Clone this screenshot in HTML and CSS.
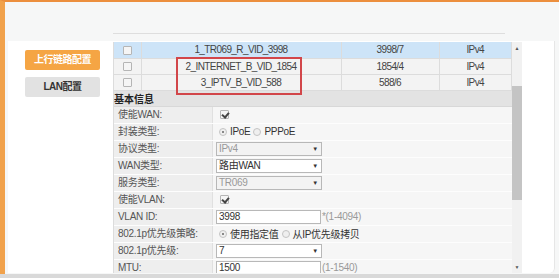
FILE: index.html
```html
<!DOCTYPE html>
<html lang="zh-CN">
<head>
  <meta charset="UTF-8" />
  <title>WAN配置</title>
  <link rel="stylesheet" href="styles.css">
</head>
<body>
  <div class="frame">
    <div class="top"><div class="top-line"></div></div>
    <div class="panel">
      <div class="side">
        <div class="btn btn-on">上行链路配置</div>
        <div class="btn">LAN配置</div>
      </div>
      <div class="main">
        <div class="scroll-body">
          <table class="wan-list">
            <tr class="picked">
              <td class="c-chk"><span class="chk"></span></td>
              <td class="c-name">1_TR069_R_VID_3998</td>
              <td class="c-vid">3998/7</td>
              <td class="c-ip">IPv4</td>
            </tr>
            <tr>
              <td class="c-chk"><span class="chk"></span></td>
              <td class="c-name">2_INTERNET_B_VID_1854</td>
              <td class="c-vid">1854/4</td>
              <td class="c-ip">IPv4</td>
            </tr>
            <tr>
              <td class="c-chk"><span class="chk"></span></td>
              <td class="c-name">3_IPTV_B_VID_588</td>
              <td class="c-vid">588/6</td>
              <td class="c-ip">IPv4</td>
            </tr>
          </table>
          <div class="mark"></div>

          <div class="section">基本信息</div>
          <div class="form">
            <div class="row">
              <div class="lbl">使能WAN:</div>
              <div class="val"><span class="chk on"></span></div>
            </div>
            <div class="row">
              <div class="lbl">封装类型:</div>
              <div class="val">
                <span class="radio on"></span><span class="opt">IPoE</span>
                <span class="radio"></span><span class="opt">PPPoE</span>
              </div>
            </div>
            <div class="row">
              <div class="lbl">协议类型:</div>
              <div class="val"><div class="sel off">IPv4<span class="caret">▼</span></div></div>
            </div>
            <div class="row">
              <div class="lbl">WAN类型:</div>
              <div class="val"><div class="sel">路由WAN<span class="caret">▼</span></div></div>
            </div>
            <div class="row">
              <div class="lbl">服务类型:</div>
              <div class="val"><div class="sel off">TR069<span class="caret">▼</span></div></div>
            </div>
            <div class="row">
              <div class="lbl">使能VLAN:</div>
              <div class="val"><span class="chk on"></span></div>
            </div>
            <div class="row">
              <div class="lbl">VLAN ID:</div>
              <div class="val"><div class="inp">3998</div><span class="hint">*(1-4094)</span></div>
            </div>
            <div class="row">
              <div class="lbl">802.1p优先级策略:</div>
              <div class="val">
                <span class="radio on"></span><span class="opt">使用指定值</span>
                <span class="radio"></span><span class="opt">从IP优先级拷贝</span>
              </div>
            </div>
            <div class="row">
              <div class="lbl">802.1p优先级:</div>
              <div class="val"><div class="sel">7<span class="caret">▼</span></div></div>
            </div>
            <div class="row">
              <div class="lbl">MTU:</div>
              <div class="val"><div class="inp">1500</div><span class="hint">(1-1540)</span></div>
            </div>
          </div>
        </div>
        <div class="scrollbar">
          <span class="arrow">▲</span>
          <div class="track"><div class="thumb"></div></div>
          <span class="arrow">▼</span>
        </div>
      </div>
      <div class="gutter"></div>
    </div>
  </div>
</body>
</html>
```

FILE: styles.css
```css
* {
  box-sizing: border-box;
}

body {
  margin: 0;
  background-color: #d9d9d9;
  font-family: "Liberation Sans", "Noto Sans CJK SC", sans-serif;
  font-size: 10px;
  color: #333;
}

.frame {
  width: 559px;
  height: 274px;
  border-top: 2px solid #ec8f3e;
  border-left: 5px solid #f1a24c;
  background-color: #f6f7f7;
}

.top {
  height: 39px;
  padding-top: 31px;
}

.top-line {
  margin-left: 108px;
  width: 392px;
  height: 1px;
  background-color: #dedede;
}

.panel {
  display: flex;
  margin-left: 3px;
  width: 547px;
  height: 232px;
  background-color: #fff;
  border-radius: 0 0 5px 0;
}

/* sidebar */
.side {
  width: 105px;
  padding: 9px 0 0 17px;
  display: flex;
  flex-direction: column;
  gap: 7px;
}

.btn {
  width: 75px;
  height: 20px;
  line-height: 20px;
  text-align: center;
  font-weight: bold;
  letter-spacing: -0.5px;
  border-radius: 2px;
  background-color: #e2e2e2;
  color: #333;
}

.btn-on {
  background-color: #f5a544;
  color: #fff;
}

/* main scroll area */
.main {
  display: flex;
  width: 409px;
  padding-top: 1px;
}

.scroll-body {
  position: relative;
  width: 399px;
  height: 231px;
  overflow: hidden;
  border-left: 1px solid #dcdcdc;
}

.wan-list {
  width: 398px;
  border-collapse: collapse;
  table-layout: fixed;
}

.wan-list td {
  height: 16px;
  padding: 0;
  text-align: center;
  border-right: 1px solid #dcdcdc;
  border-bottom: 1px solid #dcdcdc;
  background-color: #f3f3f3;
  color: #444;
  letter-spacing: -0.6px;
}

.wan-list .picked td {
  background-color: #cde4f8;
}

.c-chk { width: 27px; }
.c-name { width: 200px; }
.c-vid { width: 98px; }

.mark {
  position: absolute;
  left: 62px;
  top: 15px;
  width: 126px;
  height: 38px;
  border: 2px solid #d2464a;
}

.section {
  height: 16px;
  line-height: 17px;
  background-color: #e3e3e3;
  font-weight: bold;
  color: #222;
  border-bottom: 1px solid #d8d8d8;
}

.row {
  display: flex;
  height: 17px;
  border-bottom: 1px solid #fdfdfd;
}

.lbl {
  width: 99px;
  padding-left: 4px;
  line-height: 16px;
  background-color: #eeeeee;
  color: #555;
  border-right: 1px solid #e0e0e0;
  letter-spacing: -0.3px;
}

.val {
  flex: 1;
  display: flex;
  align-items: center;
  padding-left: 3px;
  background-color: #f6f6f6;
  color: #333;
}

/* controls */
.chk {
  display: inline-block;
  width: 9px;
  height: 9px;
  border: 1px solid #b5b5b5;
  border-radius: 1px;
  background-color: #f5f5f5;
  vertical-align: middle;
}

.val .chk {
  margin-left: 4px;
  position: relative;
}

.chk.on::after {
  content: "";
  position: absolute;
  left: 2px;
  top: 0;
  width: 3px;
  height: 5px;
  border-right: 2px solid #444;
  border-bottom: 2px solid #444;
  transform: rotate(40deg);
}

.radio {
  position: relative;
  display: inline-block;
  width: 8px;
  height: 8px;
  margin-left: 3px;
  border: 1px solid #c4c4c4;
  border-radius: 50%;
  background-color: #efefef;
}

.radio.on::after {
  content: "";
  position: absolute;
  left: 2px;
  top: 2px;
  width: 2px;
  height: 2px;
  border-radius: 50%;
  background-color: #666;
}

.opt {
  margin-left: 3px;
  letter-spacing: -0.3px;
}

.sel,
.inp {
  position: relative;
  width: 106px;
  height: 14px;
  line-height: 12px;
  padding-left: 2px;
  border: 1px solid #b8b8b8;
  background-color: #fff;
  letter-spacing: -0.3px;
}

.inp {
  width: 105px;
}

.sel.off {
  background-color: #f3f3f3;
  color: #999;
}

.caret {
  position: absolute;
  right: 3px;
  top: 0;
  font-size: 6px;
  color: #333;
}

.hint {
  margin-left: 1px;
  color: #999;
  letter-spacing: -0.3px;
}

/* scrollbar */
.scrollbar {
  width: 10px;
  height: 231px;
  display: flex;
  flex-direction: column;
  background-color: #f1f1f1;
}

.arrow {
  height: 12px;
  line-height: 12px;
  text-align: center;
  font-size: 5px;
  color: #555;
}

.track {
  flex: 1;
  padding-top: 32px;
}

.thumb {
  height: 114px;
  background-color: #c4c4c4;
}

.gutter {
  flex: 1;
  border-right: 1px solid #e6e6e6;
  border-radius: 0 0 5px 0;
}
```
